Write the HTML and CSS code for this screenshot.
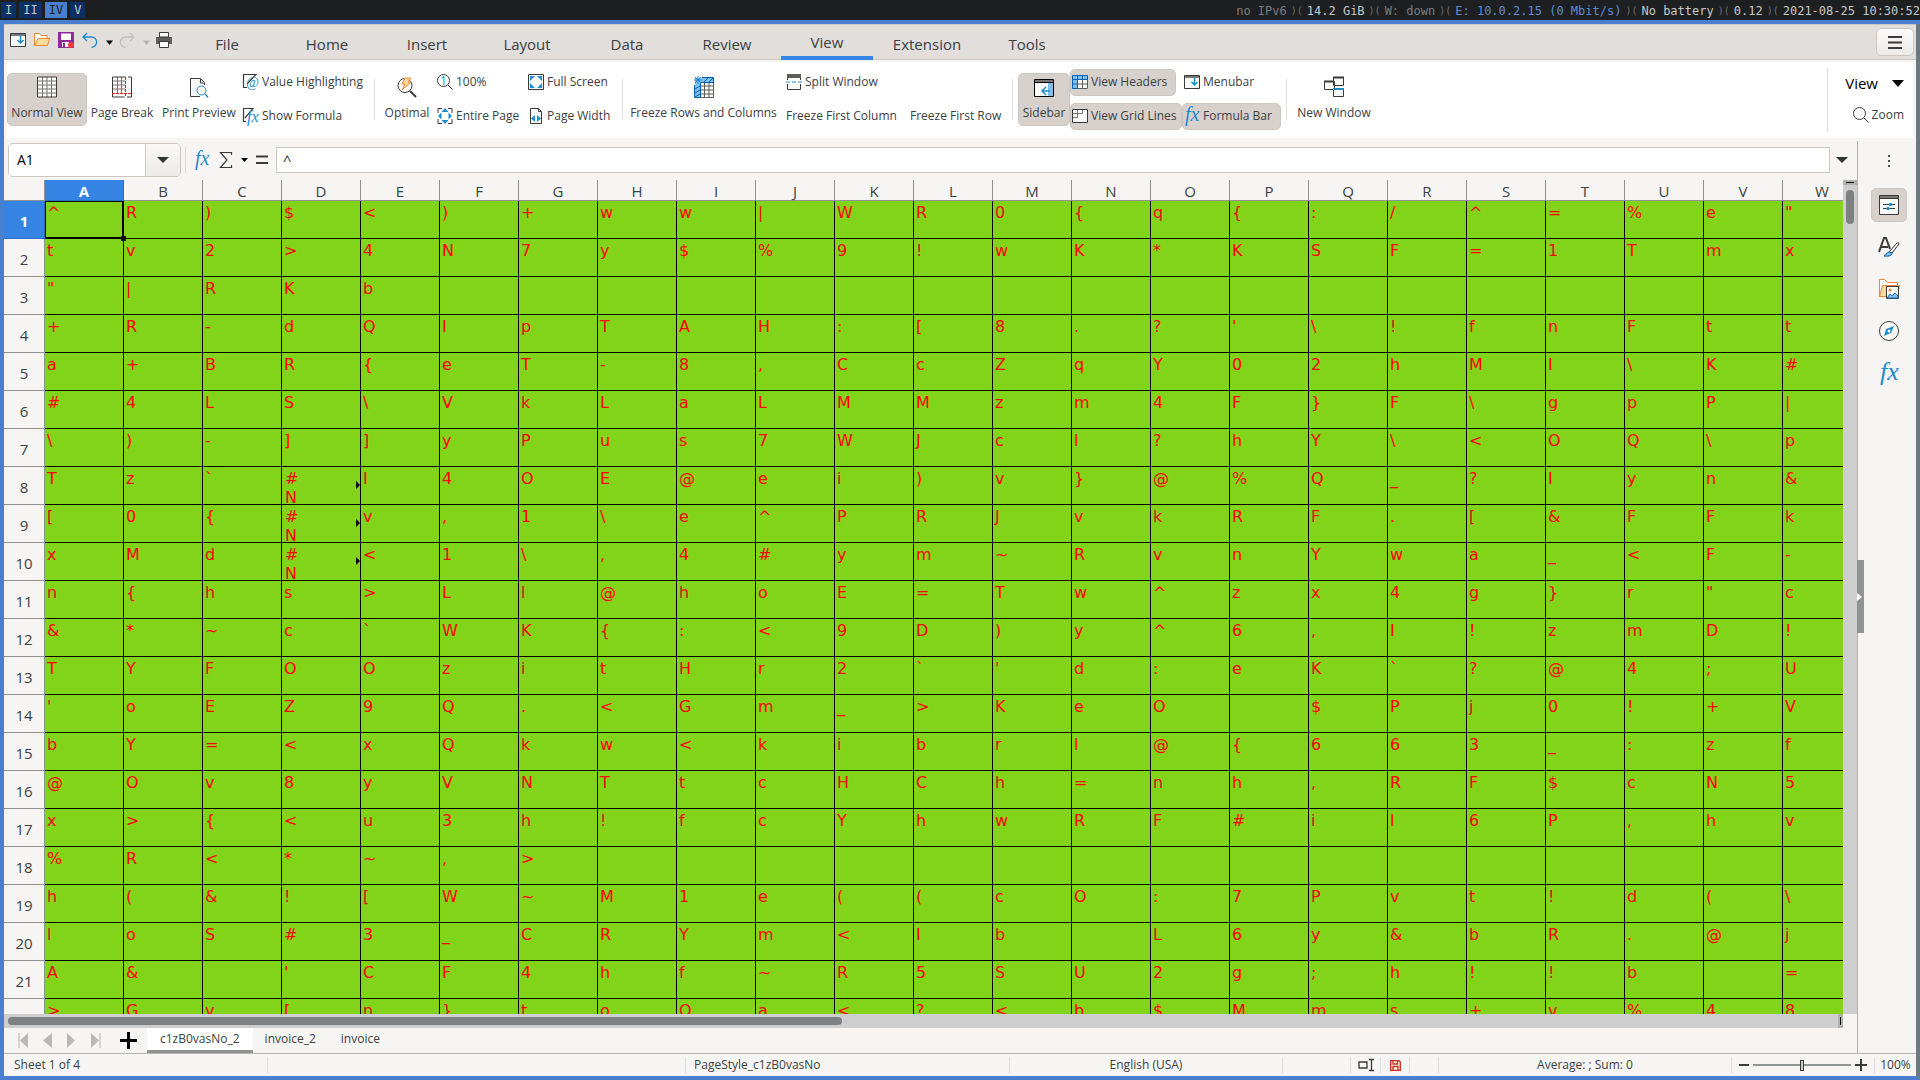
FILE: index.html
```html
<!DOCTYPE html>
<html lang="en">
<head>
<meta charset="utf-8">
<title>Spreadsheet</title>
<link rel="stylesheet" href="styles.css">
</head>
<body>
<header class="wm">
  <nav class="spaces">
    <a href="#">I</a><a href="#">II</a><a href="#" class="on">IV</a><a href="#">V</a>
  </nav>
  <div class="stats">
    <span class="dim">no IPv6</span><i>)(</i><span>14.2 GiB</span><i>)(</i><span class="dim">W: down</span><i>)(</i><span class="net">E: 10.0.2.15 (0 Mbit/s)</span><i>)(</i><span>No battery</span><i>)(</i><span>0.12</span><i>)(</i><span>2021-08-25 10:30:52</span>
  </div>
</header>

<main class="window">
  <div class="tabbar">
    <div class="quick">
      <button aria-label="Menubar"><svg width="16" height="16" viewBox="0 0 16 16"><path d="M.5 1.500h15v13H.5z" fill="#fafafa" stroke="#3a3a38"/><path d="M1 2h14v2H1z" fill="#797774"/><path d="M10.500 3v8M7.500 8l3 3 3-3" fill="none" stroke="#1e8bcd" stroke-width="1.500"/></svg></button>
      <button aria-label="Open"><svg width="16" height="16" viewBox="0 0 16 16"><path d="M.5 13.500v-12h5l1.500 2h6v3" fill="#fff" stroke="#ed8733"/><path d="M.7 13.500 4 6.500h11.500l-2 7z" fill="#fbdc9a" stroke="#ed8733"/></svg></button>
      <button aria-label="Save"><svg width="16" height="16" viewBox="0 0 16 16"><path d="M.7.700h14.600v14.600H.7z" fill="#fff" stroke="#9029a0" stroke-width="1.400"/><path d="M0 8h16v8H0zM0 0h3v9H0zM13 0h3v9h-3z" fill="#9029a0"/><path d="M4 10h7v5H4z" fill="#fff"/><path d="M5 11h2v4H5z" fill="#9029a0"/><circle cx="13" cy="13" r="3" fill="#ed3d3b"/></svg></button>
      <button aria-label="Undo"><svg width="16" height="16" viewBox="0 0 16 16"><path d="M5 1 1 5l4 4M1 5h8.500a5 5 0 0 1 0 10.300" fill="none" stroke="#1e8bcd" stroke-width="1.300"/></svg></button>
      <button class="drop" aria-label="Undo list"><svg width="7" height="5" viewBox="0 0 7 5"><path d="M0 .5h7L3.500 5z"/></svg></button>
      <button aria-label="Redo"><svg width="16" height="16" viewBox="0 0 16 16"><path d="m11 1 4 4-4 4M15 5H6.500a5 5 0 0 0 0 10.300" fill="none" stroke="#c1bebb" stroke-width="1.300"/></svg></button>
      <button class="drop" aria-label="Redo list"><svg width="7" height="5" viewBox="0 0 7 5"><path d="M0 .5h7L3.500 5z" fill="#b5b2af"/></svg></button>
      <button aria-label="Print"><svg width="16" height="16" viewBox="0 0 16 16"><path d="M0 5h16v7H0z" fill="#5d5d5b"/><path d="M3.500.500h9V5h-9zM3.500 9.500h9v6h-9z" fill="#fafafa" stroke="#3a3a38"/></svg></button>
    </div>
    <nav class="tabs">
      <button>File</button><button>Home</button><button>Insert</button><button>Layout</button><button>Data</button><button>Review</button><button class="on">View</button><button>Extension</button><button>Tools</button>
    </nav>
    <button class="burger" aria-label="Menu"><svg width="14" height="13" viewBox="0 0 14 13"><path d="M0 1h14M0 6.500h14M0 12h14" stroke="#3d3d3d" stroke-width="2"/></svg></button>
  </div>

  <div class="ribbon">
    <button class="big normal on"><svg width="20" height="22" viewBox="0 0 20 22"><path d="M.5 1h19v20H.5z" fill="#fafafa"/><path d="M.5 5h19M.5 9h19M.5 13h19M.5 17h19M5.500 1v20M10 1v20M14.500 1v20" stroke="#797774"/><path d="M.5 1h19v20H.5z" fill="none" stroke="#3a3a38"/></svg>Normal View</button>
    <button class="big break"><svg width="20" height="22" viewBox="0 0 20 22"><path d="M.5 1h19v20H.5z" fill="#fafafa"/><path d="M.5 5H13M.5 9H13M.5 13H13M5.500 1v16M9.500 1v16" stroke="#797774"/><path d="M13.500 1H.5v16M.5 18v3h12M16 1h3.500v20H15" fill="none" stroke="#3a3a38"/><path d="M13.500 1v20M0 17.500h20" stroke="#ed1c24" stroke-dasharray="3 1"/></svg>Page Break</button>
    <button class="big preview"><svg width="20" height="22" viewBox="0 0 20 22"><path d="M11 20.500H1.500v-18h10l4 4V9" fill="#fafafa" stroke="#3a3a38"/><path d="M11.500 3v4H15" fill="none" stroke="#3a3a38"/><circle cx="12.500" cy="14.500" r="4.500" fill="#fafafa" stroke="#1e8bcd"/><path d="m16 18 3 3.500" stroke="#1e8bcd" stroke-width="1.400"/></svg>Print Preview</button>
    <div class="pair values">
      <button><svg width="16" height="16" viewBox="0 0 16 16"><path d="M4 13.500H.5V.500H13L4 10" fill="none" stroke="#3a3a38" stroke-width="1.200"/><text x="3" y="13" class="glyph at">@</text></svg>Value Highlighting</button>
      <button><svg width="16" height="16" viewBox="0 0 16 16"><path d="M3 13.500H.5V.500H10L2 10" fill="none" stroke="#3a3a38" stroke-width="1.200"/><text x="4" y="14" class="glyph fx">fx</text></svg>Show Formula</button>
    </div>
    <hr>
    <button class="big optimal"><svg width="20" height="22" viewBox="0 0 20 22"><circle cx="8" cy="9.500" r="7" fill="#fafafa" stroke="#3a3a38"/><path d="m13 15 6 6" stroke="#3a3a38" stroke-width="2"/><path d="M8 2h6l-3 4h3l-9 8 3-6H5z" fill="#fbdc9a" stroke="#ed8733"/></svg>Optimal</button>
    <div class="pair page">
      <button><svg width="16" height="16" viewBox="0 0 16 16"><circle cx="6.500" cy="6.500" r="6" fill="#fff" stroke="#3a3a38"/><path d="m11 11 4.500 4.500" stroke="#3a3a38"/><text x="3" y="11" class="glyph one">1</text></svg>100%</button>
      <button><svg width="16" height="16" viewBox="0 0 16 16"><path d="M1 5V.500h4M11 .500h4V5M15 11v4.500h-4M5 15.500H1V11" fill="none" stroke="#3a3a38"/><path d="M8 0l3.500 4h-7zM8 16l3.500-4h-7zM1 8l3.500-3.500v7zM15 8l-3.500-3.500v7z" fill="#1e8bcd"/></svg>Entire Page</button>
    </div>
    <div class="pair screen">
      <button><svg width="16" height="16" viewBox="0 0 16 16"><path d="M.5.500h15v15H.5z" fill="#fafafa" stroke="#3a3a38"/><path d="M2 2h5L2 7zM14 2v5L9 2zM2 14V9l5 5zM14 14H9l5-5z" fill="#1e8bcd"/></svg>Full Screen</button>
      <button><svg width="16" height="16" viewBox="0 0 16 16"><path d="M2.500.500h8l3 3v12h-11z" fill="#fafafa" stroke="#3a3a38"/><path d="M10.500.500v3h3" fill="none" stroke="#3a3a38"/><path d="M3 10.500 7 7v7zM13 10.500 9 7v7z" fill="#1e8bcd"/></svg>Page Width</button>
    </div>
    <hr>
    <button class="big freeze"><svg width="20" height="22" viewBox="0 0 20 22"><path d="M1 2h19v20H1z" fill="#fafafa"/><path d="M1 2h19v4H6v16H1z" fill="#83beec"/><path d="M6.500 6v15.500h13V2M6 10h14M6 14h14M6 18h14M10.500 6v16M15 6v16" fill="none" stroke="#5d5d5b"/><path d="M.5 9v12.500h6V6.500h13v-5H8M1 13l5-3M1 17l5-3M1 21l5-3M10 6l4-4M15 6l4-4" fill="none" stroke="#0063b1"/><path d="M4 0v8M0 4h8M1 1l6 6M7 1 1 7" stroke="#1e8bcd"/></svg>Freeze Rows and Columns</button>
    <div class="pair split">
      <button><svg width="16" height="16" viewBox="0 0 16 16"><path d="M1.500 6V.500h13V6M1.500 10v5.500h13V10" fill="#fafafa" stroke="#3a3a38"/><path d="M1 0h14v4H1z" fill="#5d5d5b"/><path d="M0 8h16" stroke="#1e8bcd" stroke-dasharray="4 2"/></svg>Split Window</button>
      <button>Freeze First Column</button>
    </div>
    <div class="pair firstrow">
      <span class="blank"></span>
      <button>Freeze First Row</button>
    </div>
    <hr>
    <button class="big sidebar on"><svg width="20" height="22" viewBox="0 0 20 22"><path d="M.5 3.500h19v17H.5z" fill="#fafafa" stroke="#000"/><path d="M14 6h5v14h-5z" fill="#83beec"/><path d="M1 4h18v2H1z" fill="#797774"/><path d="M0 6.500h20" stroke="#000"/><path d="m12 11-4 4 4 4M8 15h8" fill="none" stroke="#1e8bcd" stroke-width="1.500"/></svg>Sidebar</button>
    <div class="pair headers">
      <button class="on"><svg width="16" height="16" viewBox="0 0 16 16"><path d="M0 1h16v14H0z" fill="#fafafa"/><path d="M0 1h16v4H5v10H0z" fill="#83beec"/><path d="M10.500 5v10M5 10h10.500M15.500 5v9.500H5" fill="none" stroke="#5d5d5b"/><path d="M.5 14.500V1.500h15V5.500H.5M5.500 1v13.500H.5M10.500 1v4M.5 10h5" fill="none" stroke="#0063b1"/></svg>View Headers</button>
      <button class="on wide"><svg width="16" height="16" viewBox="0 0 16 16"><path d="M.5 1.500h15v13H.5z" fill="#fafafa" stroke="#3a3a38"/><path d="M1 5.500h9.500V2M5.500 2v7.500H1" fill="none" stroke="#797774"/></svg>View Grid Lines</button>
    </div>
    <div class="pair bars">
      <button><svg width="16" height="16" viewBox="0 0 16 16"><path d="M.5 1.500h15v13H.5z" fill="#fafafa" stroke="#3a3a38"/><path d="M1 2h14v2H1z" fill="#797774"/><path d="M10.500 3v8M7.500 8l3 3 3-3" fill="none" stroke="#1e8bcd" stroke-width="1.500"/></svg>Menubar</button>
      <button class="on wide"><svg width="16" height="18" viewBox="0 0 16 18"><text x="1" y="14" class="glyph fx20">fx</text></svg>Formula Bar</button>
    </div>
    <hr>
    <button class="big newwin"><svg width="20" height="22" viewBox="0 0 20 22"><path d="M.5 5.500h10v8H.5zM9.500 1.500h10v8h-10zM9.500 12.500h10v8h-10z" fill="#fafafa" stroke="#3a3a38"/><path d="M0 5.500h10M9 1.500h11" stroke="#3a3a38" stroke-width="2"/><path d="M9 13h11" stroke="#1e8bcd" stroke-width="2"/></svg>New Window</button>
    <div class="context">
      <button class="name">View<svg width="12" height="7" viewBox="0 0 12 7"><path d="M0 0h12L6 7z"/></svg></button>
      <button><svg width="16" height="16" viewBox="0 0 16 16"><circle cx="6.500" cy="6.500" r="6" fill="none" stroke="#3a3a38"/><path d="m11 11 4.500 4.500" stroke="#3a3a38"/></svg>Zoom</button>
    </div>
  </div>

  <div class="work">
    <section class="sheet">
      <div class="formula">
        <div class="namebox"><input aria-label="Name Box" value="A1"><button aria-label="Names"><svg width="12" height="6" viewBox="0 0 12 6"><path d="M0 0h12L6 6z" fill="#2e3436"/></svg></button></div>
        <hr>
        <button aria-label="Function Wizard"><svg width="18" height="20" viewBox="0 0 18 20"><text x="2" y="15" class="glyph fx20">fx</text></svg></button>
        <button aria-label="Sum"><svg width="14" height="18" viewBox="0 0 14 18"><path d="M12.500 4V1.500h-11L8 9l-6.500 7.500h11V14" fill="none" stroke="#3a3a38" stroke-width="1.200"/></svg></button>
        <button aria-label="Sum functions"><svg width="7" height="4" viewBox="0 0 7 4"><path d="M0 0h7L3.500 4z"/></svg></button>
        <button aria-label="Formula"><svg width="12" height="10" viewBox="0 0 12 10"><path d="M0 1.500h12M0 8h12" stroke="#3a3a38" stroke-width="2"/></svg></button>
        <input class="line" aria-label="Input line" value="^">
        <button class="expand" aria-label="Expand"><svg width="12" height="6" viewBox="0 0 12 6"><path d="M0 0h12L6 6z" fill="#2e3436"/></svg></button>
      </div>
      <div class="gridrow">
        <div class="grid"><table id="cells"></table></div>
        <div class="vscroll"><b></b><i></i></div>
      </div>
      <div class="hscroll"><div class="track"><i></i><b></b></div></div>
      <div class="sheets">
        <button aria-label="First sheet"><svg width="11" height="15" viewBox="0 0 11 15"><path d="M1 0v15" stroke="#b3b3b1"/><path d="M10 0v15L2 7.500z" fill="#b9b9b7"/></svg></button>
        <button aria-label="Previous sheet"><svg width="11" height="15" viewBox="0 0 11 15"><path d="M10 0v15L1 7.500z" fill="#b9b9b7"/></svg></button>
        <button aria-label="Next sheet"><svg width="11" height="15" viewBox="0 0 11 15"><path d="M1 0v15l8-7.500z" fill="#b9b9b7"/></svg></button>
        <button aria-label="Last sheet"><svg width="11" height="15" viewBox="0 0 11 15"><path d="M10 0v15" stroke="#b3b3b1"/><path d="M1 0v15l8-7.500z" fill="#b9b9b7"/></svg></button>
        <button class="add" aria-label="Add sheet"><svg width="17" height="17" viewBox="0 0 17 17"><path d="M8.500 0v17M0 8.500h17" stroke="#000" stroke-width="3"/></svg></button>
        <button class="tab on">c1zB0vasNo_2</button><button class="tab">invoice_2</button><button class="tab">invoice</button>
      </div>
    </section>
    <aside class="side">
      <button class="handle" aria-label="Hide sidebar"><svg width="5" height="8" viewBox="0 0 5 8"><path d="M0 0v8l5-4z" fill="#fff"/></svg></button>
      <button class="dots" aria-label="Sidebar settings"><svg width="2" height="12" viewBox="0 0 2 12"><path d="M0 0h2v2H0zM0 5h2v2H0zM0 10h2v2H0z" fill="#4a4a4a"/></svg></button>
      <button class="deck on" aria-label="Properties"><svg width="20" height="20" viewBox="0 0 20 20"><path d="M.5.500h19v19H.5z" fill="#fafafa" stroke="#3a3a38"/><path d="M1 1h18v2H1z" fill="#797774"/><path d="M0 3.500h20M4 9.500h12M4 13.500h12" stroke="#3a3a38"/><circle cx="11.500" cy="9.500" r="1.700" fill="#1e8bcd"/><circle cx="9" cy="13.500" r="1.700" fill="#1e8bcd"/></svg></button>
      <button class="deck" aria-label="Styles"><svg width="22" height="22" viewBox="0 0 22 22"><path d="m1 16 5-14h2l4 11M3 11h7" fill="none" stroke="#3a3a38" stroke-width="2"/><path d="m11 16 8-9q2-1 2 1l-7 9z" fill="#fafafa" stroke="#3a3a38"/><path d="M6 20q2-1 3-3 2-2 5 0 0 4-8 3z" fill="#83beec" stroke="#0063b1"/></svg></button>
      <button class="deck" aria-label="Gallery"><svg width="22" height="20" viewBox="0 0 22 20"><path d="M1.500 17.500V.500h5l3 3h10v3" fill="#fafafa" stroke="#ed8733"/><path d="m1.500 17.500 3-11h17l-1 4v7z" fill="#fbdc9a" stroke="#ed8733"/><path d="M8.500 7.500h12v12h-12z" fill="#fafafa" stroke="#3a3a38"/><path d="m9 19 3-4 2 2 3-3 3 3v2z" fill="#83beec" stroke="#1e6fb8"/><circle cx="12" cy="11" r="1.500" fill="#ed8733"/></svg></button>
      <button class="deck" aria-label="Navigator"><svg width="20" height="20" viewBox="0 0 20 20"><circle cx="10" cy="10" r="9.500" fill="#fafafa" stroke="#3a3a38"/><path d="m15 5-3 7-7 3 2-7z" fill="#1e8bcd"/><circle cx="10" cy="10" r="1.500" fill="#fff"/></svg></button>
      <button class="deck" aria-label="Functions"><svg width="20" height="24" viewBox="0 0 20 24"><text x="1" y="19" class="glyph fx26">fx</text></svg></button>
    </aside>
  </div>

  <footer class="status">
    <span class="s1">Sheet 1 of 4</span><span class="s2"></span><span class="s3">PageStyle_c1zB0vasNo</span><span class="s4">English (USA)</span><span class="s5"></span>
    <span class="s6"><svg width="16" height="12" viewBox="0 0 16 12"><path d="M1 3h8v6H1zM11 .500h5M11 11.500h5M13.500 0v12" fill="none" stroke="#3a3a38" stroke-width="1.300"/></svg></span>
    <span class="s7"><svg width="11" height="11" viewBox="0 0 11 11"><path d="M.7.700H9l1.300 1.300v8.300H.7zM3 1v3h4.500V1M3 10V6.500h5V10" fill="none" stroke="#d2281e" stroke-width="1.300"/></svg></span>
    <span class="s7"></span>
    <span class="s8">Average: ; Sum: 0</span>
    <span class="zoom"><button aria-label="Zoom out"><svg width="10" height="12" viewBox="0 0 10 12"><path d="M0 6h10" stroke="#3a3a38" stroke-width="2"/></svg></button><input type="range" aria-label="Zoom" min="0" max="100" value="50"><button aria-label="Zoom in"><svg width="12" height="12" viewBox="0 0 12 12"><path d="M0 6h12M6 0v12" stroke="#3a3a38" stroke-width="2"/></svg></button></span>
    <span class="pct">100%</span>
  </footer>
</main>
<script src="cells.js"></script>
</body>
</html>
```
FILE: cells.js
```js
// One string per row; "·" is an empty cell and "#N" a value that wraps and is cut off.
const rows = [
  '^ R ) $ < ) + w w | W R 0 { q { : / ^ = % e "',
  't v 2 > 4 N 7 y $ % 9 ! w K * K S F = 1 T m x',
  '" | R K b',
  "+ R - d Q I p T A H : [ 8 . ? ' \\ ! f n F t t",
  'a + B R { e T - 8 , C c Z q Y 0 2 h M I \\ K #',
  '# 4 L S \\ V k L a L M M z m 4 F } F \\ g p P |',
  '\\ ) - ] ] y P u s 7 W J c l ? h Y \\ < O Q \\ p',
  'T z ` #N I 4 O E @ e i ) v } @ % Q _ ? I y n &',
  '[ 0 { #N v , 1 \\ e ^ P R J v k R F . [ & F F k',
  'x M d #N < 1 \\ , 4 # y m ~ R v n Y w a _ < F -',
  'n { h s > L l @ h o E = T w ^ z x 4 g } r " c',
  '& * ~ c ` W K { : < 9 D ) y ^ 6 , I ! z m D !',
  "T Y F O O z i t H r 2 ` ' d : e K ` ? @ 4 ; U",
  "' o E Z 9 Q . < G m _ > K e O · $ P j 0 ! + V",
  'b Y = < x Q k w < k i b r l @ { 6 6 3 _ : z f',
  '@ O v 8 y V N T t c H C h = n h , R F $ c N 5',
  'x > { < u 3 h ! f c Y h w R F # i l 6 P , h v',
  '% R < * ~ , >',
  'h ( & ! [ W ~ M 1 e ( ( c O : 7 P v t ! d ( \\',
  'l o S # 3 _ C R Y m < I b · L 6 y & b R . @ j',
  "A & · ' C F 4 h f ~ R 5 S U 2 g ; h ! ! b · =",
  '> G v [ n } t o O a < ? < b $ M m s + v % 4 8'
];
const columns = 'ABCDEFGHIJKLMNOPQRSTUVW'.split('');

const add = (parent, tag, text, name) => {
  const el = document.createElement(tag);
  if (text) el.textContent = text;
  if (name) el.className = name;
  parent.append(el);
  return el;
};

const table = document.getElementById('cells');
const head = add(add(table, 'thead'), 'tr');
add(head, 'td', '', 'corner');
columns.forEach((c, i) => { add(head, 'th', c, i === 0 ? 'on' : '').scope = 'col'; });

const body = add(table, 'tbody');
rows.forEach((line, r) => {
  const tr = add(body, 'tr');
  add(tr, 'th', String(r + 1), r === 0 ? 'on' : '').scope = 'row';
  const values = line.split(' ');
  columns.forEach((_, i) => {
    const v = values[i] && values[i] !== '·' ? values[i] : '';
    const cut = v === '#N';
    const td = add(tr, 'td', '', r === 0 && i === 0 ? 'cursor' : cut ? 'cut' : '');
    add(td, 'div', cut ? '#\nN' : v);
  });
});
```
FILE: styles.css
```css
* { box-sizing: border-box; }
html, body { height: 100%; margin: 0; }
body {
  display: flex; flex-direction: column; overflow: hidden;
  font: 12px/16px "Open Sans", sans-serif; color: #3b4143; background: #4a7fcf;
}
button {
  display: flex; align-items: center; padding: 0; border: 0;
  background: none; color: inherit; font: inherit; white-space: nowrap;
}
input { font: inherit; min-width: 0; }
svg { flex: none; display: block; overflow: visible; }
hr { border: 0; margin: 0; width: 1px; background: #dedddb; flex: none; }

/* desktop bar */
.wm {
  height: 20px; flex: none; display: flex; justify-content: space-between;
  background: #1d1f21; color: #c5c8c6; font: 12px/18px "DejaVu Sans Mono", monospace;
}
.spaces { display: flex; gap: 3px; padding: 2px 0 2px 1px; }
.spaces a { padding: 0 4px; background: #0c2f66; color: #c5c8c6; text-decoration: none; line-height: 17px; }
.spaces a.on { background: #4a7fcf; color: #1d1f21; }
.stats { display: flex; gap: 4px; line-height: 22px; }
.stats i { font-style: normal; color: #6a6d6f; font-size: 10px; }
.dim { color: #7a7d7f; }
.net { color: #5b8bd0; }

.window {
  flex: 1; min-height: 0; margin-top: 4px; display: flex; flex-direction: column;
  border: solid #4a7fcf; border-width: 0 4px 4px; border-right-color: #6b7982; background: #f6f5f4;
}

/* tab bar */
.tabbar {
  height: 36px; flex: none; display: flex; background: #e1dedb;
  border: solid #cdc7c2; border-width: 1px 0;
}
.quick { display: flex; align-items: flex-start; gap: 8px; padding: 7px 0 0 6px; width: 177px; }
.quick .drop { height: 20px; margin-right: -2px; }
.tabs { display: flex; gap: 8px; flex: 1; }
.tabs button { width: 92px; justify-content: center; font-size: 15px; line-height: 20px; padding-top: 3px; }
.tabs .on { border-bottom: 4px solid #3584e4; height: 35px; }
.burger {
  width: 38px; height: 28px; margin: 3px 2px 0 0; justify-content: center;
  border: 1px solid #cdc7c2; border-radius: 5px; background: linear-gradient(#fbfafa, #edebe9);
}

/* ribbon */
.ribbon { height: 76px; flex: none; margin: 2px 3px 0; display: flex; background: #fff; }
.ribbon hr { height: 41px; margin-top: 17px; }
.big {
  height: 53px; margin-top: 11px; flex-direction: column; justify-content: space-between;
  padding: 2px 0 4px; border: 1px solid transparent; border-radius: 5px;
}
.pair { display: flex; flex-direction: column; align-items: flex-start; gap: 7px; padding-top: 7px; }
.pair button { height: 27px; gap: 3px; padding: 0 8px 2px 1px; border: 1px solid transparent; border-radius: 5px; }
.pair .wide { align-self: stretch; }
.pair .blank { height: 27px; }
.ribbon .on { background: #d6d1cd; border-color: #cdc7c2; }
.normal { width: 80px; }
.break { width: 70px; }
.preview { width: 84px; }
.values { width: 133px; }
.optimal { width: 56px; margin-left: 4px; }
.page { width: 91px; }
.screen { width: 96px; }
.freeze { width: 161px; }
.split { width: 124px; }
.firstrow { width: 104px; }
.sidebar { width: 52px; margin-left: 5px; }
.headers { width: 112px; }
.bars { width: 104px; padding-right: 5px; }
.newwin { width: 94px; }
.glyph { fill: #1e8bcd; font-family: "Liberation Serif", serif; font-style: italic; }
.at { font-size: 14px; }
.fx { font-size: 16px; }
.fx20 { font-size: 20px; }
.fx26 { font-size: 26px; }
.one { font-size: 12px; font-style: normal; font-family: "Open Sans", sans-serif; }
.context {
  margin: 6px 0 6px auto; padding: 4px 9px 0 17px; border-left: 1px solid #dedddb;
  display: flex; flex-direction: column; align-items: flex-end; gap: 13px;
}
.context button { gap: 3px; }
.context .name { gap: 14px; font-size: 15px; line-height: 22px; color: #000; }

/* work area */
.work { flex: 1; min-height: 0; display: flex; }
.sheet { flex: 1; min-width: 0; display: flex; flex-direction: column; }
.formula { height: 42px; flex: none; display: flex; align-items: center; padding: 2px 7px 0 4px; }
.namebox {
  width: 173px; height: 34px; display: flex; overflow: hidden;
  border: 1px solid #cdc7c2; border-radius: 5px; background: #fff;
}
.namebox input { flex: 1; border: 0; padding: 0 8px; font-size: 14px; color: #000; }
.namebox button { width: 35px; justify-content: center; border-left: 1px solid #cdc7c2; background: linear-gradient(#f8f7f6, #edebe9); }
.formula hr { height: 26px; margin: 0 7px 0 4px; }
.formula > button { margin-right: 8px; }
.formula .line { flex: 1; height: 26px; padding: 0 6px; border: 1px solid #cdc7c2; background: #fff; font-size: 15px; color: #2e3436; }
.formula > .expand { margin: 0 2px 0 6px; }

.gridrow { flex: 1; min-height: 0; display: flex; }
.grid { flex: 1; min-width: 0; overflow: hidden; }
#cells { table-layout: fixed; border-spacing: 0; width: 1858px; }
#cells th, #cells td { padding: 0; height: 38px; width: 79px; }
#cells th { background: #f6f5f4; font-weight: 400; font-size: 15px; line-height: 18px; border: solid #8f9192; border-width: 0 1px 1px 0; }
#cells thead th, #cells .corner { height: 21px; }
#cells thead th { padding-top: 1px; }
#cells .corner, #cells tbody th { width: 41px; }
#cells .corner { border: solid #8f9192; border-width: 0 1px 1px 0; background: #f6f5f4; }
#cells tbody th { padding-top: 2px; }
#cells th.on { background: #3584e4; color: #fff; font-weight: 700; border-color: #2a6fc4; }
#cells tbody td { background: #81d41a; border: solid #000; border-width: 0 1px 1px 0; position: relative; }
#cells td div { height: 37px; padding: 2px 0 0 2px; overflow: hidden; white-space: pre; color: #f00; font: 16px/19px "DejaVu Sans", sans-serif; }
#cells .cursor { outline: 1px solid #000; outline-offset: -1px; }
#cells .cursor div { box-shadow: inset 1px 1px #000, inset -1px -1px #000; }
#cells .cursor::after { content: ""; position: absolute; right: -3px; bottom: -3px; width: 5px; height: 5px; background: #000; z-index: 1; }
#cells .cut div { padding-left: 3px; }
#cells .cut::after {
  content: ""; position: absolute; right: 0; top: 14px;
  border: 4px solid transparent; border-left-color: #000; border-right: 0;
}

.vscroll { width: 14px; background: #cecece; }
.vscroll b { display: block; height: 5px; background: linear-gradient(#000, #000) center / 8px 1px no-repeat #b0b0b0; }
.vscroll i { display: block; width: 8px; height: 34px; margin: 5px 3px; border-radius: 4px; background: #7e8181; }
.hscroll { height: 14px; flex: none; padding-right: 14px; }
.track { height: 14px; background: #cecece; display: flex; justify-content: space-between; align-items: center; padding-left: 4px; }
.track i { width: calc(100% * 5 / 11); height: 8px; border-radius: 4px; background: #7e8181; }
.track b { width: 5px; height: 14px; background: linear-gradient(#000, #000) center / 1px 8px no-repeat #b0b0b0; }

.sheets { height: 25px; flex: none; display: flex; align-items: center; padding-left: 14px; gap: 13px; }
.sheets .add { margin: 0 -3px 0 6px; }
.tab { height: 25px; padding: 0 13px; margin-right: -14px; border-bottom: 3px solid transparent; }
.tab.on { background: #fff; border-color: #8f9192; }

/* sidebar */
.side {
  width: 59px; flex: none; margin-top: 3px; position: relative; border-left: 1px solid #b5b2af;
  display: flex; flex-direction: column; align-items: center; gap: 8px; padding: 14px 0 0 3px;
}
.deck { width: 36px; height: 34px; justify-content: center; border: 1px solid transparent; border-radius: 5px; }
.deck.on { background: #d6d1cd; border-color: #cdc7c2; }
.dots { height: 12px; margin-bottom: 13px; }
.handle { position: absolute; left: -1px; top: calc(50% - 37px); width: 7px; height: 73px; background: #909394; }

/* status bar */
.status { height: 23px; flex: none; display: flex; align-items: center; border-top: 1px solid #b5b2af; }
.status > span { height: 16px; border-right: 1px solid #dedddb; display: flex; align-items: center; justify-content: center; flex: none; }
.status .s1 { width: 264px; justify-content: flex-start; padding-left: 10px; }
.status .s2 { flex: 1; }
.status .s3 { width: 324px; justify-content: flex-start; padding-left: 8px; }
.status .s4 { width: 273px; }
.status .s5 { width: 68px; }
.status .s6 { width: 30px; }
.status .s7 { width: 29px; }
.status .s8 { width: 293px; }
.status .zoom { width: 143px; gap: 4px; }
.zoom input { appearance: none; width: 98px; height: 12px; margin: 0; background: linear-gradient(#909394, #909394) center / 100% 2px no-repeat; }
.zoom input::-webkit-slider-thumb { appearance: none; width: 4px; height: 11px; border: 1px solid #3a3a38; background: #cecece; }
.status .pct { width: 41px; border: 0; }
```
